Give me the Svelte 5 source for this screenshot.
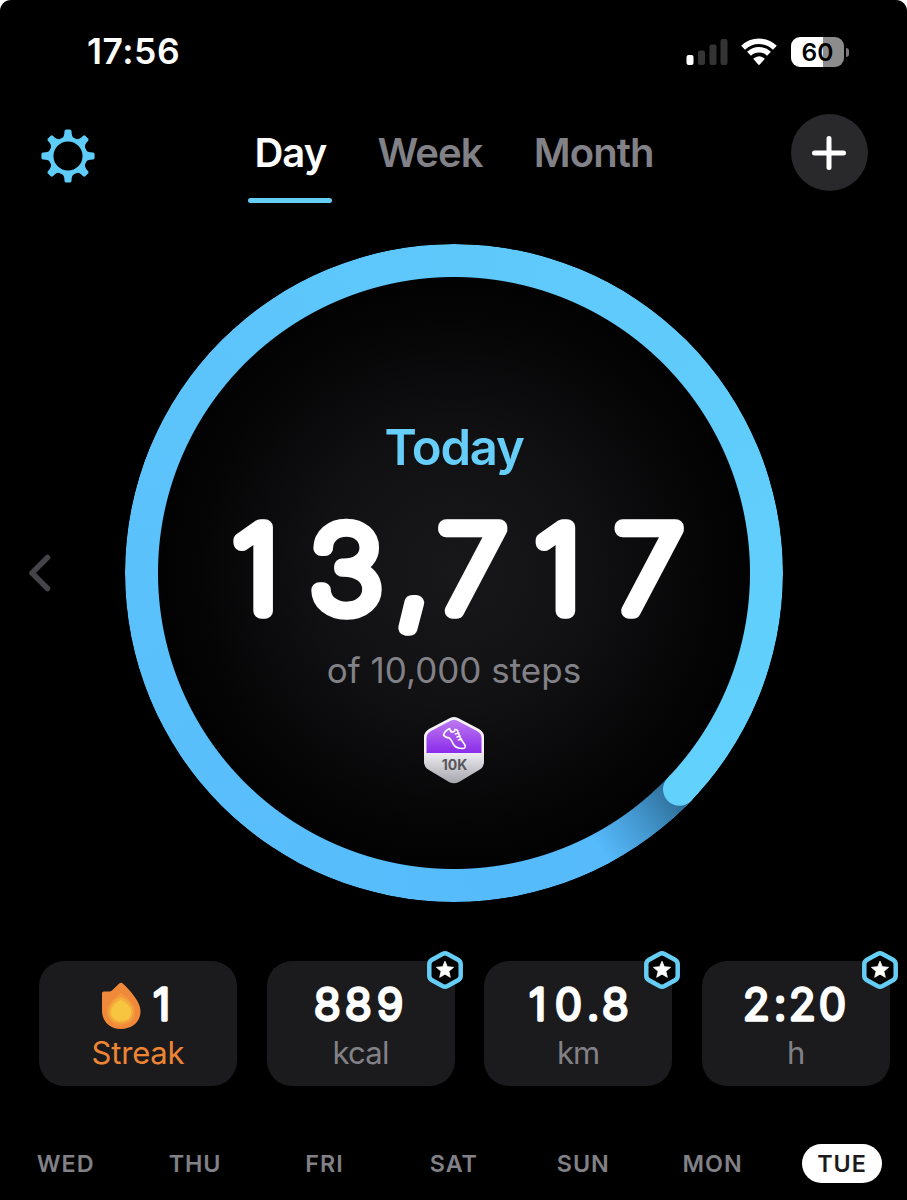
<script lang="ts">
	type Stat = {
		value: string;
		unit: string;
		glyphs: number[];
		streak?: boolean;
	};

	const tabs = ["Day", "Week", "Month"];
	const days = ["WED", "THU", "FRI", "SAT", "SUN", "MON", "TUE"];
	const stats: Stat[] = [
		{ value: "1", unit: "Streak", glyphs: [6], streak: true },
		{ value: "889", unit: "kcal", glyphs: [47, 78, 110] },
		{ value: "10.8", unit: "km", glyphs: [45, 71, 103, 118] },
		{ value: "2:20", unit: "h", glyphs: [41, 72, 87, 117] }
	];
	const teeth = [0, 45, 90, 135, 180, 225, 270, 315];

	let activeTab = $state("Day");
	let activeDay = $state("TUE");
</script>

<main class="screen">
	<header class="status">
		<span class="time">17:56</span>
		<div class="indicators">
			<svg class="signal" viewBox="0 0 42 28">
				<rect x="0.500" y="17" width="7" height="10" rx="2" fill="#fff" />
				<rect x="12" y="12.500" width="7" height="14.500" rx="2" fill="#343434" />
				<rect x="23.500" y="6.500" width="7" height="20.500" rx="2" fill="#343434" />
				<rect x="34.500" y="1" width="7" height="26" rx="2" fill="#343434" />
			</svg>
			<svg class="wifi" viewBox="0 0 36 28">
				<path d="M2.100 9.800A22.800 22.800 0 0 1 33.900 9.800" />
				<path d="M8 15.800A14.200 14.200 0 0 1 28 15.800" />
				<path class="dot" d="M12.200 20.800Q18 15.800 23.800 20.800L18.800 26.500Q18 27.300 17.200 26.500Z" />
			</svg>
			<div class="battery">
				<span class="cell">60</span>
				<i class="nub"></i>
			</div>
		</div>
	</header>

	<nav class="top">
		<button class="icon-button" aria-label="Settings">
			<svg class="gear" viewBox="-27 -27 54 54">
				<circle r="16.800" />
				{#each teeth as angle}
					<path
						transform="rotate({angle})"
						d="M-6.500 -17.500Q-4 -19 -3.700 -22L-3.500 -25Q-3.300 -26.600 -1.800 -26.600H1.800Q3.300 -26.600 3.500 -25L3.700 -22Q4 -19 6.500 -17.500Z"
					/>
				{/each}
			</svg>
		</button>
		<div class="tabs">
			{#each tabs as tab}
				<button class="tab" class:active={tab === activeTab} onclick={() => (activeTab = tab)}>
					<span>{tab}</span>
					<i class="underline"></i>
				</button>
			{/each}
		</div>
		<button class="add" aria-label="Add">
			<svg viewBox="0 0 36 36"><path d="M18 3.500V32.500M3.500 18H32.500" /></svg>
		</button>
	</nav>

	<section class="hero">
		<button class="prev" aria-label="Previous day">
			<svg viewBox="0 0 23 40"><path d="M18.500 4.500L3 20L18.500 35.500" /></svg>
		</button>
		<div class="dial">
			<div class="ring"></div>
			<svg class="ring-end" viewBox="0 0 658 658">
				<defs>
					<linearGradient id="shade" gradientUnits="userSpaceOnUse" x1="554" y1="545" x2="474" y2="603">
						<stop offset="0" stop-color="#10344c" stop-opacity="0.62" />
						<stop offset="0.5" stop-color="#174463" stop-opacity="0.3" />
						<stop offset="1" stop-color="#174463" stop-opacity="0" />
					</linearGradient>
				</defs>
				<path d="M554.300 545.200A312.500 312.500 0 0 1 460 612.800" fill="none" stroke="url(#shade)" stroke-width="33" />
				<circle cx="554.500" cy="545.300" r="16.500" fill="#62d1fc" />
			</svg>
			<div class="summary">
				<h1>Today</h1>
				<svg class="count" viewBox="0 0 480 150">
					<text transform="scale(1.08 1)" y="98.500" x="17.500 89 169 208 297.500 371.500">13,717</text>
				</svg>
				<p>of 10,000 steps</p>
				<svg class="medal" viewBox="0 0 64 70">
					<defs>
						<linearGradient id="silver" x1="0" y1="0" x2="0" y2="1">
							<stop offset="0.5" stop-color="#f5f3f8" />
							<stop offset="1" stop-color="#a6a6ad" />
						</linearGradient>
						<linearGradient id="violet" x1="0" y1="0" x2="0" y2="1">
							<stop offset="0" stop-color="#bd79ef" />
							<stop offset="1" stop-color="#8b2cec" />
						</linearGradient>
					</defs>
					<path
						fill="url(#silver)"
						d="M28 3Q32 1 36 3L57 14Q62 17 62 22V47Q62 52 57 55L37 67Q32 69.500 27 67L7 55Q2 52 2 47V22Q2 17 7 14Z"
					/>
					<path fill="url(#violet)" d="M29 5.500Q32 4 35 5.500L55 16Q59.500 18.500 59.500 23V38H4.500V23Q4.500 18.500 9 16Z" />
					<path
						class="shoe"
						d="M27.500 13.500Q28.500 17.500 31 17Q33 16.500 33 14.500Q35.500 14 36 17L38.500 23.500L43 30Q44 33.500 40.500 33.500Q34 33.500 31.500 29.500Q29.500 25 27.500 23Q23 22.500 21.500 20Q22.500 16 27.500 13.500ZM33.500 19L36.800 18M35 22L38 21M36.500 25L39.500 24"
					/>
					<text x="32.500" y="54.500" text-anchor="middle">10K</text>
				</svg>
			</div>
		</div>
	</section>

	<section class="stats">
		{#each stats as stat}
			<article class="card" class:streak={stat.streak}>
				<div class="value">
					{#if stat.streak}
						<svg class="flame" viewBox="0 0 40 48">
							<path
								fill="#f0893a"
								d="M1 11Q1 9.500 3 9.500H8.500Q10 9.500 11 8.500L18 1.700Q20 0 22 1.700C29 8 39.500 20 39.500 29C39.500 40 31 47 20 47C9 47 1 40 1 28Z"
							/>
							<path fill="#f29a3b" d="M20 11C26 15 34 22 34 29.500C34 37.500 28 43 20 43C12 43 6 37.500 6 29.500C6 22 14 15 20 11Z" />
							<path fill="#f5ad3c" d="M20 15C26 17 32 24 32 30C32 37 26 41 20 41C14 41 8 37 8 30C8 24 14 17 20 15Z" />
							<path fill="#f8c541" d="M20 18C25 20 30 25 30 30.500C30 36 25 39 20 39C15 39 10 36 10 30.500C10 25 15 20 20 18Z" />
						</svg>
					{/if}
					<svg class="digits" viewBox="0 0 {stat.streak ? 28 : 188} 60">
						<text y="37.500" x={stat.glyphs.join(" ")}>{stat.value}</text>
					</svg>
				</div>
				<span class="unit">{stat.unit}</span>
				{#if !stat.streak}
					<svg class="badge" viewBox="0 0 38 40">
						<path
							class="hex"
							d="M16.500 4Q19 2.700 21.500 4L32 9.800Q34.700 11.300 34.700 14.300V25.700Q34.700 28.700 32 30.200L21.500 36Q19 37.300 16.500 36L6 30.200Q3.300 28.700 3.300 25.700V14.300Q3.300 11.300 6 9.800Z"
						/>
						<path
							class="star"
							d="M19 11.200L21.300 16.700L27.600 17.300L22.900 21.300L24.300 27.300L19 24.200L13.700 27.300L15.100 21.300L10.400 17.300L16.700 16.700Z"
						/>
					</svg>
				{/if}
			</article>
		{/each}
	</section>

	<footer class="week">
		{#each days as day}
			<button class="day" class:active={day === activeDay} onclick={() => (activeDay = day)}>
				<span>{day}</span>
			</button>
		{/each}
	</footer>
</main>

<style>
	:global(body) {
		background: #fff;
	}

	.screen {
		display: flex;
		flex-direction: column;
		width: 907px;
		height: 1200px;
		box-sizing: border-box;
		overflow: hidden;
		border-radius: 11px 11px 0 0;
		background: #000;
		color: #fff;
		font-family: Inter, "Liberation Sans", sans-serif;
	}

	button {
		display: block;
		padding: 0;
		border: 0;
		background: none;
		color: inherit;
		font: inherit;
	}

	svg {
		display: block;
		overflow: visible;
	}

	.status {
		display: flex;
		align-items: center;
		justify-content: space-between;
		height: 104px;
		padding: 0 58px 0 87px;
		box-sizing: border-box;
	}

	.time {
		font-size: 35.500px;
		font-weight: 600;
		letter-spacing: 0.5px;
		line-height: 40px;
	}

	.indicators {
		display: flex;
		align-items: center;
		height: 30px;
	}

	.signal {
		width: 42px;
		height: 28px;
	}

	.wifi {
		width: 36px;
		height: 28px;
		margin: 0 14px 0 13px;
	}

	.wifi path {
		fill: none;
		stroke: #fff;
		stroke-width: 5.500;
	}

	.wifi .dot {
		fill: #fff;
		stroke: none;
	}

	.battery {
		display: flex;
		align-items: center;
		gap: 2px;
	}

	.cell {
		width: 53px;
		border-radius: 9px;
		background: linear-gradient(90deg, #fff 32px, #8c8c8c 32px);
		color: #000;
		font-size: 24.500px;
		font-weight: 600;
		line-height: 30px;
		text-align: center;
	}

	.nub {
		width: 3px;
		height: 9px;
		border-radius: 0 4px 4px 0;
		background: #777;
	}

	.top {
		display: flex;
		align-items: flex-start;
		justify-content: space-between;
		height: 140px;
		padding: 10px 39px 0 41px;
		box-sizing: border-box;
	}

	.icon-button {
		margin-top: 14.500px;
	}

	.gear {
		width: 54px;
		height: 54px;
	}

	.gear circle {
		fill: none;
		stroke: #5fcdf9;
		stroke-width: 4.500;
	}

	.gear path {
		fill: #5fcdf9;
	}

	.tabs {
		display: flex;
		gap: 39px;
		margin-left: 22px;
	}

	.tab {
		color: #828187;
		font-size: 40px;
		font-weight: 600;
		letter-spacing: -0.9px;
		line-height: 77px;
	}

	.tab span {
		display: block;
		padding: 0 6px;
	}

	.underline {
		display: block;
		height: 5px;
		margin-top: 7px;
		border-radius: 3px;
	}

	.tab.active {
		color: #fff;
	}

	.active .underline {
		background: #66cef5;
	}

	.add {
		display: grid;
		place-items: center;
		width: 77px;
		height: 77px;
		border-radius: 50%;
		background: #29292b;
	}

	.add svg {
		width: 36px;
		height: 36px;
	}

	.add path {
		stroke: #fff;
		stroke-width: 5;
		stroke-linecap: round;
	}

	.hero {
		display: flex;
		align-items: center;
		gap: 73px;
		height: 658px;
		padding-left: 29px;
	}

	.prev svg {
		width: 23px;
		height: 40px;
	}

	.prev path {
		fill: none;
		stroke: #454449;
		stroke-width: 5.500;
		stroke-linecap: round;
		stroke-linejoin: round;
	}

	.dial {
		display: grid;
		width: 658px;
		height: 658px;
	}

	.dial > * {
		grid-area: 1 / 1;
	}

	.ring {
		border-radius: 50%;
		background: conic-gradient(from 133.800deg, #55b9fb, #5bc1fb 38%, #5fcafb 70%, #62d1fc);
		mask: radial-gradient(circle, transparent 295.500px, #000 296.500px);
	}

	.ring-end {
		width: 658px;
		height: 658px;
		z-index: 1;
	}

	.summary {
		display: flex;
		flex-direction: column;
		align-items: center;
		margin: 32px;
		padding-top: 142px;
		border-radius: 50%;
		background: radial-gradient(circle closest-side, #18181a 0%, #111113 45%, #050506 85%, #020203 100%);
	}

	h1 {
		margin: 0;
		color: #66cef8;
		font-size: 49px;
		font-weight: 600;
		letter-spacing: -1.2px;
		line-height: 60px;
	}

	.count {
		width: 480px;
		height: 150px;
		margin-top: 34px;
	}

	.count text,
	.digits text {
		fill: #fff;
		stroke: #fff;
		stroke-linejoin: round;
		stroke-linecap: round;
	}

	.count text {
		font-size: 115px;
		font-weight: 100;
		stroke-width: 15.500px;
	}

	.summary p {
		margin: -13px 0 0;
		color: #828187;
		font-size: 35px;
		line-height: 42px;
	}

	.medal {
		width: 64px;
		height: 70px;
		margin-top: 24px;
	}

	.medal text {
		fill: #56565b;
		font-size: 14px;
		font-weight: 700;
	}

	.shoe {
		fill: none;
		stroke: #fff;
		stroke-width: 1.600;
		stroke-linecap: round;
		stroke-linejoin: round;
	}

	.stats {
		display: grid;
		grid-template-columns: 198px 188px 188px 188px;
		gap: 29.600px;
		height: 125px;
		margin-top: 59px;
		padding-left: 39px;
	}

	.card {
		position: relative;
		display: flex;
		flex-direction: column;
		align-items: center;
		padding-top: 21px;
		border-radius: 25px;
		background: #1b1b1d;
	}

	.value {
		display: flex;
		gap: 6px;
		height: 48px;
	}

	.flame {
		width: 40px;
		height: 48px;
	}

	.digits {
		width: 188px;
		height: 60px;
	}

	.streak .digits {
		width: 28px;
	}

	.digits text {
		font-size: 43.500px;
		font-weight: 300;
		stroke-width: 3.400px;
	}

	.unit {
		margin-top: 3px;
		color: #828187;
		font-size: 31px;
		letter-spacing: -0.8px;
		line-height: 40px;
	}

	.streak .unit {
		color: #ee8535;
		letter-spacing: -0.2px;
	}

	/* overhangs the top right corner of the card */
	.badge {
		position: absolute;
		top: -11px;
		right: -9px;
		width: 38px;
		height: 40px;
	}

	.hex {
		fill: #000;
		stroke: #66cdf4;
		stroke-width: 4.500;
	}

	.star {
		fill: #fff;
		stroke: #fff;
		stroke-width: 0.800;
		stroke-linejoin: round;
	}

	.week {
		display: grid;
		grid-template-columns: repeat(7, 129.400px);
		margin-top: 58px;
		padding-left: 1px;
	}

	.day {
		display: grid;
		place-items: center;
		color: #828187;
		font-size: 23.300px;
		font-weight: 600;
		letter-spacing: 1px;
		line-height: 39px;
	}

	.day span {
		width: 80px;
		border-radius: 20px;
		text-align: center;
	}

	.day.active span {
		background: #fff;
		color: #1b1b1d;
	}
</style>
